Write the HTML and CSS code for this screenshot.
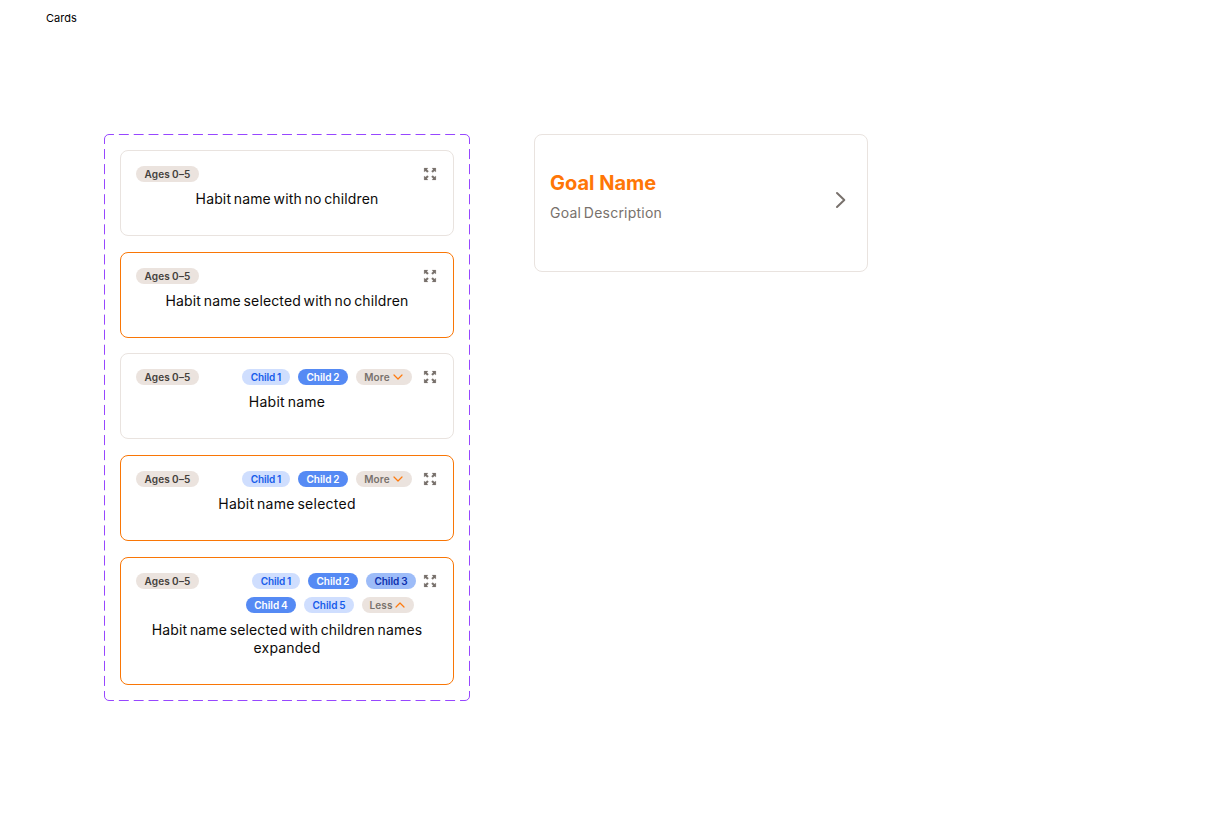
FILE: index.html
```html
<!DOCTYPE html>
<html lang="en">
<head>
<meta charset="utf-8">
<title>Cards</title>
<link rel="stylesheet" href="styles.css">
</head>
<body>
<svg class="defs" aria-hidden="true">
  <symbol id="expand" viewBox="0 0 16 16">
    <g fill="#78716c" stroke="#78716c" stroke-width=".2" stroke-linejoin="round"><path d="M2.100 2.100h3.900L4.900 3.400 6.600 5.300 5.300 6.600 3.400 4.900 2.100 6z"/><path d="M13.900 2.100H10l1.100 1.300-1.700 1.900 1.300 1.300 1.900-1.700L13.900 6z"/><path d="M2.100 13.900H6l-1.100-1.300 1.700-1.900-1.300-1.300-1.900 1.700L2.100 10z"/><path d="M13.900 13.900H10l1.100-1.300-1.700-1.900 1.300-1.300 1.900 1.700L13.900 10z"/></g>
  </symbol>
  <symbol id="down" viewBox="0 0 10 8"><path d="M1 2l4 4 4-4" fill="none" stroke="#ff7a0d" stroke-width="1.200" stroke-linecap="round" stroke-linejoin="round"/></symbol>
  <symbol id="up" viewBox="0 0 10 8"><path d="M1 6l4-4 4 4" fill="none" stroke="#ff7a0d" stroke-width="1.200" stroke-linecap="round" stroke-linejoin="round"/></symbol>
</svg>
<h1 class="title">Cards</h1>
<main class="board">
  <section class="frame">
    <svg class="outline" viewBox="0 0 366 567">
      <path class="dash-h" d="M5 .5H361M5 566.500H361"/>
      <path class="dash-v" d="M.5 5V562M365.500 5V562"/>
      <path d="M.5 5A4.500 4.500 0 0 1 5 .5M361 .5A4.500 4.500 0 0 1 365.500 5M365.500 562A4.500 4.500 0 0 1 361 566.500M5 566.500A4.500 4.500 0 0 1 .5 562"/>
    </svg>
    <article class="card">
      <div class="top"><span class="pill age"><span>Ages 0–5</span></span><svg class="expand"><use href="#expand"/></svg></div>
      <p class="name"><span>Habit name with no children</span></p>
    </article>
    <article class="card selected">
      <div class="top"><span class="pill age"><span>Ages 0–5</span></span><svg class="expand"><use href="#expand"/></svg></div>
      <p class="name"><span>Habit name selected with no children</span></p>
    </article>
    <article class="card third">
      <div class="top"><span class="pill age"><span>Ages 0–5</span></span>
        <div class="kids"><div class="row"><span class="pill light one">Child 1</span><span class="pill blue">Child 2</span><span class="pill more">More<svg class="chev"><use href="#down"/></svg></span></div></div>
        <svg class="expand"><use href="#expand"/></svg></div>
      <p class="name short"><span>Habit name</span></p>
    </article>
    <article class="card selected">
      <div class="top"><span class="pill age"><span>Ages 0–5</span></span>
        <div class="kids"><div class="row"><span class="pill light one">Child 1</span><span class="pill blue">Child 2</span><span class="pill more">More<svg class="chev"><use href="#down"/></svg></span></div></div>
        <svg class="expand"><use href="#expand"/></svg></div>
      <p class="name short"><span>Habit name selected</span></p>
    </article>
    <article class="card selected expanded">
      <div class="top"><span class="pill age"><span>Ages 0–5</span></span>
        <div class="kids"><div class="row first"><span class="pill light one">Child 1</span><span class="pill blue">Child 2</span><span class="pill mid">Child 3</span></div>
        <div class="row second"><span class="pill blue">Child 4</span><span class="pill light">Child 5</span><span class="pill more less">Less<svg class="chev"><use href="#up"/></svg></span></div></div>
        <svg class="expand"><use href="#expand"/></svg></div>
      <p class="name"><span>Habit name selected with children names<br>expanded</span></p>
    </article>
  </section>
  <article class="goal">
    <div class="goal-text"><h2 class="goal-name">Goal Name</h2><p class="goal-desc">Goal Description</p></div>
    <svg class="arrow" viewBox="0 0 24 24"><path d="M9 5l7.300 7L9 19" /></svg>
  </article>
</main>
</body>
</html>
```
FILE: styles.css
```css
* { box-sizing: border-box; }
body { margin: 0; background: #fff; color: #0c0a09; font-family: Inter, "Liberation Sans", sans-serif; }
.defs { display: none; }
.title { margin: 0; padding: 10px 0 0 46px; font-size: 11px; line-height: 16px; font-weight: 400; color: #000; }
.board { display: flex; align-items: flex-start; gap: 64px; padding: 108px 0 0 104px; }
.frame { position: relative; width: 366px; height: 567px; padding: 16px; display: flex; flex-direction: column; gap: 16px; }
.outline { position: absolute; inset: 0; width: 366px; height: 567px; fill: none; stroke: #9747ff; }
.dash-h { stroke-dasharray: 9.889 4.944; stroke-dashoffset: 4.944; }
.dash-v { stroke-dasharray: 10.036 5.018; stroke-dashoffset: 5.018; }
.card { height: 86px; flex: none; border: 1px solid #e9e3df; border-radius: 8px; padding: 15px; }
.card.third { margin-top: -1px; }
.card.selected { border-color: #f97606; }
.card.expanded { height: 128px; }
.top { display: flex; min-height: 16px; }
.kids { margin-left: auto; display: flex; flex-direction: column; gap: 8px; align-items: flex-end; padding-right: 10px; }
.expanded .kids { padding-right: 6px; }
.row { display: flex; gap: 8px; }
.second { padding-right: 2px; }
.pill { width: 50px; height: 16px; border-radius: 8px; display: flex; align-items: center; justify-content: center; font-size: 10px; font-weight: 600; line-height: 16px; letter-spacing: 0; word-spacing: -0.6px; white-space: nowrap; }
.one { width: 48px; letter-spacing: -0.08px; }
.age { width: 63px; background: #ebe3de; color: #44403c; letter-spacing: 0.2px; }
.light { background: #cfdefe; color: #155bea; }
.blue { background: #558af4; color: #fff; }
.mid { background: #9dbcf8; color: #0b2fae; }
.more { width: 56px; gap: 3px; background: #ebe3de; color: #78716c; letter-spacing: 0.1px; padding-right: 1px; }
.less { width: 52px; }
.chev { width: 10px; height: 8px; }
.expand { width: 16px; height: 16px; margin-left: auto; flex: none; }
.kids + .expand { margin-left: 0; }
.name { margin: 8px 0 0; text-align: center; font-size: 14px; font-weight: 400; line-height: 18px; letter-spacing: 0.14px; word-spacing: -1.4px; white-space: nowrap; }
.short { letter-spacing: 0.25px; }
.goal { width: 334px; height: 138px; border: 1px solid #e9e3df; border-radius: 8px; padding: 0 15px; display: flex; justify-content: space-between; }
.goal-text { padding-top: 35px; }
.goal-name { margin: 0; font-size: 20px; line-height: 26px; font-weight: 700; color: #ff7606; }
.goal-desc { margin: 8px 0 0; font-size: 14px; font-weight: 400; line-height: 18px; letter-spacing: 0.22px; word-spacing: -1.4px; color: #78716c; }
.arrow { width: 24px; height: 24px; margin-top: 53px; fill: none; stroke: #78716c; stroke-width: 2; stroke-linecap: round; stroke-linejoin: round; }
```
